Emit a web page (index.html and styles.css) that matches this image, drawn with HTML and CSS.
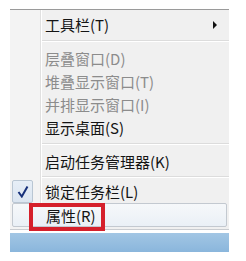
FILE: index.html
```html
<!DOCTYPE html>
<html>
<head>
<title>任务栏菜单</title>
<link rel="stylesheet" href="styles.css">
</head>
<body>

<div class="screen">
  <div class="menu">
    <div class="item">工具栏(T)<span class="arrow"></span></div>
    <div class="sep"></div>
    <div class="item disabled">层叠窗口(D)</div>
    <div class="item disabled">堆叠显示窗口(T)</div>
    <div class="item disabled">并排显示窗口(I)</div>
    <div class="item">显示桌面(S)</div>
    <div class="sep"></div>
    <div class="item">启动任务管理器(K)</div>
    <div class="sep sep-tight"></div>
    <div class="item checked">
      <span class="checkbox">
        <svg width="12" height="13" viewBox="0 0 12 13"><path d="M1.5 7 L4.8 11.5 L10.5 1.5" fill="none" stroke="#16307a" stroke-width="2"/></svg>
      </span>
      锁定任务栏(L)
    </div>
    <div class="item hover">
      属性(R)
      <span class="mark"></span>
    </div>
  </div>
  <div class="taskbar"></div>
</div>

</body>
</html>
```

FILE: styles.css
```css
body {
  margin: 0;
  background-color: #ffffff;
  font-family: "Noto Sans CJK SC", "Noto Sans", sans-serif;
}

.screen {
  padding: 9px 17px 9px 10px;
}

.menu {
  width: 219px;
  border-top: 1px solid #9a9a9a;
  border-bottom: 1px solid #c9ccd0;
  padding: 3px 0 2px 0;
  background: linear-gradient(to right, #f3f3f3 30px, #e0e0e0 30px, #e0e0e0 31px, #ffffff 31px, #ffffff 32px, #f0f0f0 32px);
}

.item {
  position: relative;
  height: 23px;
  line-height: 23px;
  padding-left: 35px;
  font-size: 15px;
  color: #141414;
  white-space: nowrap;
}

.disabled {
  color: #8c8c8c;
}

.arrow {
  position: absolute;
  left: 203px;
  top: 8px;
  border-top: 4px solid transparent;
  border-bottom: 4px solid transparent;
  border-left: 4px solid #111;
}

.sep {
  margin: 4px 0 5px 32px;
  height: 1px;
  background: #dcdcdc;
  border-bottom: 1px solid #ffffff;
}

.sep-tight {
  margin: 3px 0 2px 32px;
}

.checkbox {
  position: absolute;
  left: 2px;
  top: 0;
  width: 19px;
  height: 21px;
  border: 1px solid #b9c6d3;
  border-radius: 2px;
  background: linear-gradient(#e6eef7, #dbe5f0);
  display: flex;
  align-items: center;
  justify-content: center;
}

.hover {
  height: 24px;
  line-height: 24px;
  margin: 0 2px;
  padding-left: 33px;
  border: 1px solid #c3c9d0;
  border-radius: 2px;
  background: linear-gradient(#f6f8fa, #eaf0f6);
  box-sizing: border-box;
}

.mark {
  position: absolute;
  left: 16px;
  top: -1px;
  width: 68px;
  height: 20px;
  border: 4px solid #d5202b;
}

.taskbar {
  margin-top: 3px;
  width: 219px;
  height: 19px;
  background: linear-gradient(#a2c6e4, #8ab6dc);
}
```
